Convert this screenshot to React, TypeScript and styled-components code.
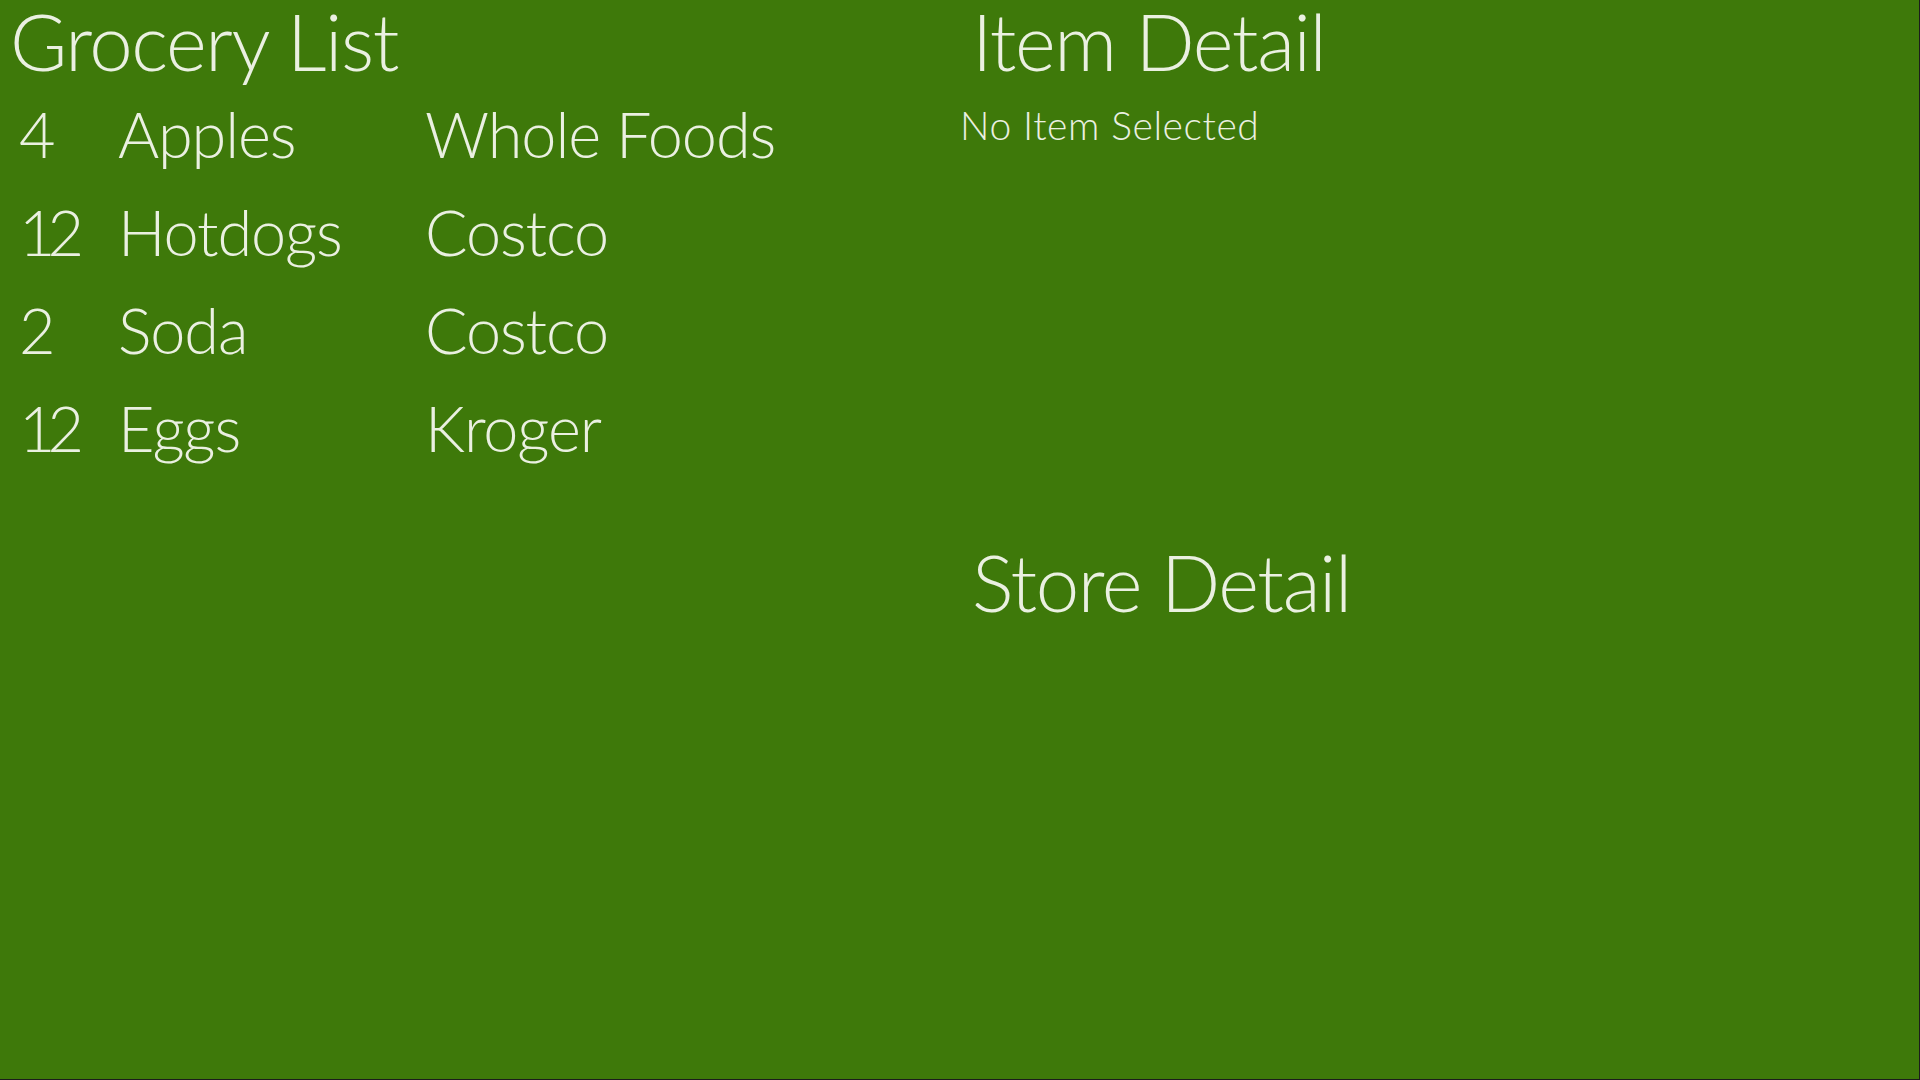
import React from "react";
import styled, { createGlobalStyle } from "styled-components";

const GlobalStyle = createGlobalStyle`
  html, body {
    margin: 0;
    padding: 0;
    background: #1c1c1c;
  }
  body {
    font-family: "Lato", "Segoe UI", "Liberation Sans", sans-serif;
  }
`;

const Screen = styled.div`
  width: 1919px;
  height: 1079px;
  background: #3e790a;
  color: #eaf0e1;
  display: grid;
  grid-template-columns: 960px 1fr;
  overflow: hidden;
  font-family: "Lato", "Segoe UI", sans-serif;
  font-weight: 300;
`;

const Column = styled.section<{ $pad: number }>`
  display: flex;
  flex-direction: column;
  padding-left: ${(p) => p.$pad}px;
`;

const Heading = styled.h1<{ $indent?: number }>`
  margin: 0;
  font-size: 78px;
  font-weight: 300;
  line-height: 82px;
  height: 85px;
  letter-spacing: -1.4px;
  padding-left: ${(p) => p.$indent ?? 0}px;
  white-space: nowrap;
`;

const ListGrid = styled.div`
  display: grid;
  grid-template-columns: 99px 307px auto;
  grid-auto-rows: 98px;
  padding-left: 9px;
`;

const Cell = styled.div<{ $tight?: boolean }>`
  font-size: 63px;
  line-height: 98px;
  letter-spacing: ${(p) => (p.$tight ? "-8px" : "-1.1px")};
  white-space: nowrap;
`;

const ItemArea = styled.div`
  height: 541px;
`;

const SubText = styled.div`
  font-size: 39px;
  line-height: 80px;
  letter-spacing: 0.6px;
  white-space: nowrap;
`;

const items = [
  { qty: "4", name: "Apples", store: "Whole Foods" },
  { qty: "12", name: "Hotdogs", store: "Costco" },
  { qty: "2", name: "Soda", store: "Costco" },
  { qty: "12", name: "Eggs", store: "Kroger" },
];

export default function App() {
  return (
    <>
      <GlobalStyle />
      <Screen>
        <Column $pad={10}>
          <Heading>Grocery List</Heading>
          <ListGrid>
            {items.map((it, i) => (
              <React.Fragment key={i}>
                <Cell $tight>{it.qty}</Cell>
                <Cell>{it.name}</Cell>
                <Cell>{it.store}</Cell>
              </React.Fragment>
            ))}
          </ListGrid>
        </Column>
        <Column $pad={0}>
          <ItemArea>
            <Heading $indent={12}>Item Detail</Heading>
            <SubText>No Item Selected</SubText>
          </ItemArea>
          <Heading $indent={12}>Store Detail</Heading>
        </Column>
      </Screen>
    </>
  );
}
